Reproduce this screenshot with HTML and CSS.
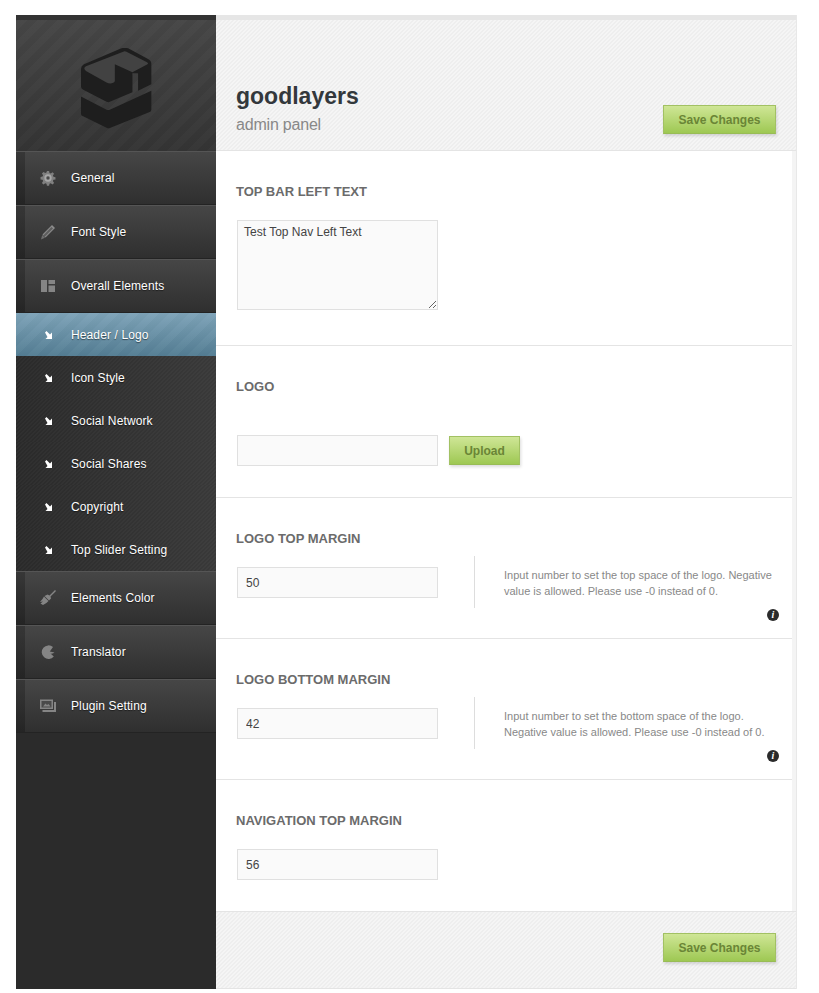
FILE: index.html
```html
<!DOCTYPE html>
<html lang="en">

<head>
    <meta charset="UTF-8">
    <meta name="viewport" content="width=device-width, initial-scale=1.0">
    <title>Goodlayers Admin Panel</title>

    <link rel="stylesheet" href="styles.css">
</head>

<body>
    <div class="panel">
        <div class="sidebar">
            <div class="logo">
                <svg class="logo-mark" viewBox="60 50 220 245" width="73" height="82">
                    <path fill="#1e1e1e" d="M72 98 L185 50 Q195 46 205 50 L265 82 Q275 87 275 97 V158 L235 178 V125 L218 125 V182 L148 212 Q145 213 140 211 L70 175 Q63 172 63 165 V112 Q63 103 72 98 Z" />
                    <path fill="#424242" d="M78 104 L190 60 Q195 58 200 60 L262 92 Q268 96 262 99 L218 122 L165 98 V148 Q165 152 160 154 Q150 158 140 153 L78 118 Q68 110 78 104 Z" />
                    <path fill="#1e1e1e" d="M63 195 L140 235 Q145 237 150 235 L275 178 V235 Q275 240 270 242 L150 290 Q145 292 140 289 L68 254 Q63 252 63 247 Z" />
                </svg>
            </div>

            <a class="item">
                <svg class="icon" viewBox="-1 -1 18 18" width="16" height="16">
                    <path fill="#808080" d="M6.800 0h2.400l.5 2.300 1.400.6 2-1.300 1.700 1.700-1.300 2 .6 1.400 2.300.5v2.400l-2.300.5-.6 1.400 1.300 2-1.700 1.700-2-1.300-1.400.6-.5 2.300H6.800l-.5-2.300-1.400-.6-2 1.300-1.700-1.700 1.300-2-.6-1.400-2.300-.5V6.800l2.300-.5.6-1.400-1.300-2 1.700-1.700 2 1.300 1.400-.6z" />
                    <circle cx="8" cy="8" r="3.200" fill="none" stroke="#a8a8a8" stroke-width="1.800" />
                    <circle cx="8" cy="8" r="1.600" fill="#4a4a4a" />
                </svg>
                <span>General</span>
            </a>
            <a class="item">
                <svg class="icon" viewBox="0 0 16 16" width="16" height="16">
                    <path fill="#8c8c8c" d="M12 1 L15 4 L5.500 13.500 L2.500 10.500 Z" />
                    <path fill="#5e5e5e" d="M11.500 3 L13 4.500 L4.800 12.700 L3.300 11.200 Z" />
                    <path fill="#6e6e6e" d="M2.200 11 L5 13.800 L1 15.500 Z" />
                </svg>
                <span>Font Style</span>
            </a>
            <a class="item">
                <svg class="icon" viewBox="0 0 16 16" width="16" height="16">
                    <path fill="#858585" d="M1 2h6v12H1z M8.500 2H15v4H8.500z M8.500 7.500H15V14H8.500z" />
                </svg>
                <span>Overall Elements</span>
            </a>

            <a class="sub sub-active">
                <svg class="arrow" viewBox="0 0 8 8" width="8" height="8"><path d="M0 1.500 L1.500 0 L5 3.500 L7 1.500 V8 H0.500 L2.500 6 Z" /></svg>
                <span>Header / Logo</span>
            </a>
            <a class="sub">
                <svg class="arrow" viewBox="0 0 8 8" width="8" height="8"><path d="M0 1.500 L1.500 0 L5 3.500 L7 1.500 V8 H0.500 L2.500 6 Z" /></svg>
                <span>Icon Style</span>
            </a>
            <a class="sub">
                <svg class="arrow" viewBox="0 0 8 8" width="8" height="8"><path d="M0 1.500 L1.500 0 L5 3.500 L7 1.500 V8 H0.500 L2.500 6 Z" /></svg>
                <span>Social Network</span>
            </a>
            <a class="sub">
                <svg class="arrow" viewBox="0 0 8 8" width="8" height="8"><path d="M0 1.500 L1.500 0 L5 3.500 L7 1.500 V8 H0.500 L2.500 6 Z" /></svg>
                <span>Social Shares</span>
            </a>
            <a class="sub">
                <svg class="arrow" viewBox="0 0 8 8" width="8" height="8"><path d="M0 1.500 L1.500 0 L5 3.500 L7 1.500 V8 H0.500 L2.500 6 Z" /></svg>
                <span>Copyright</span>
            </a>
            <a class="sub">
                <svg class="arrow" viewBox="0 0 8 8" width="8" height="8"><path d="M0 1.500 L1.500 0 L5 3.500 L7 1.500 V8 H0.500 L2.500 6 Z" /></svg>
                <span>Top Slider Setting</span>
            </a>

            <a class="item">
                <svg class="icon" viewBox="0 0 16 16" width="16" height="16">
                    <path fill="#858585" d="M15 0 L16 1 L10.500 6.500 L11 8.500 L9 10.500 L4.500 6 L7.500 4.500 L9.500 5.500 Z" />
                    <path fill="#858585" d="M4 6.500 L8.500 11 Q6.500 13.500 3 15 L0.500 13.500 L3 11.500 L0 12 Q2.500 9.500 4 6.500 Z" />
                </svg>
                <span>Elements Color</span>
            </a>
            <a class="item">
                <svg class="icon" viewBox="0 0 16 16" width="16" height="16">
                    <path fill="#858585" d="M13 3 A6.800 6.800 0 1 0 13.800 12.500 L10.500 9.500 Q13 10 14.500 8.500 L9.800 7.500 Z" />
                </svg>
                <span>Translator</span>
            </a>
            <a class="item">
                <svg class="icon" viewBox="0 0 16 16" width="16" height="16">
                    <path fill="#858585" d="M0 1.500h13v9.500H0z M14 4h2v10H2.500v-2H14z" />
                    <path fill="#4a4a4a" d="M1.500 3h10v6.500h-10z" />
                    <path fill="#858585" d="M3 8.500 L5.500 5.500 L7 7 L8.500 6 L10.500 8.500z" />
                </svg>
                <span>Plugin Setting</span>
            </a>
        </div>

        <div class="main">
            <div class="header">
                <div class="brand">
                    <h1>goodlayers</h1>
                    <p>admin panel</p>
                </div>
                <button class="btn btn-save">Save Changes</button>
            </div>

            <div class="content">
                <div class="section section-text">
                    <h3>TOP BAR LEFT TEXT</h3>
                    <textarea class="field field-area">Test Top Nav Left Text</textarea>
                </div>

                <div class="section section-logo">
                    <h3>LOGO</h3>
                    <div class="row row-upload">
                        <input class="field" type="text">
                        <button class="btn btn-upload">Upload</button>
                    </div>
                </div>

                <div class="section">
                    <h3>LOGO TOP MARGIN</h3>
                    <div class="row">
                        <input class="field" type="text" value="50">
                        <p class="desc">Input number to set the top space of the logo. Negative value is allowed. Please use -0 instead of 0.</p>
                    </div>
                    <span class="info">i</span>
                </div>

                <div class="section">
                    <h3>LOGO BOTTOM MARGIN</h3>
                    <div class="row">
                        <input class="field" type="text" value="42">
                        <p class="desc">Input number to set the bottom space of the logo. Negative value is allowed. Please use -0 instead of 0.</p>
                    </div>
                    <span class="info">i</span>
                </div>

                <div class="section section-last">
                    <h3>NAVIGATION TOP MARGIN</h3>
                    <div class="row">
                        <input class="field" type="text" value="56">
                    </div>
                </div>
            </div>

            <div class="footer">
                <button class="btn btn-save">Save Changes</button>
            </div>
        </div>
    </div>
</body>

</html>
```

FILE: styles.css
```css
body {
    margin: 0;
    background-color: #fff;
    font-family: "Liberation Sans", Arial, sans-serif;
}

.panel {
    display: flex;
    width: 781px;
    height: 974px;
    margin: 15px 0 0 16px;
}

/* sidebar */

.sidebar {
    width: 200px;
    flex-shrink: 0;
    background-color: #2b2b2b;
}

.logo {
    display: flex;
    justify-content: center;
    height: 103px;
    padding-top: 28px;
    border-top: 5px solid #333;
    background:
        repeating-linear-gradient(-45deg, rgba(255, 255, 255, 0.014) 0 7.071px, rgba(0, 0, 0, 0.018) 7.071px 14.142px),
        linear-gradient(#464646, #343434);
}

.logo-mark {
    display: block;
}

.item {
    display: flex;
    align-items: center;
    height: 52px;
    padding-left: 24px;
    border-top: 1px solid #555;
    border-bottom: 1px solid #232323;
    background:
        linear-gradient(to right, rgba(0, 0, 0, 0.22) 0 9px, transparent 9px),
        linear-gradient(#464646, #2f2f2f);
    color: #fff;
    font-size: 12px;
    letter-spacing: 0.12px;
    text-shadow: 0 1px 1px rgba(0, 0, 0, 0.5);
}

.icon {
    flex-shrink: 0;
    margin-right: 15px;
}

.sub {
    display: flex;
    align-items: center;
    height: 43px;
    padding-left: 29px;
    background:
        linear-gradient(-45deg, rgba(255, 255, 255, 0.025) 25%, transparent 25% 50%, rgba(255, 255, 255, 0.025) 50% 75%, transparent 75%) 0 0 / 4px 4px,
        linear-gradient(to right, #2a2a2a, #393939);
    color: #fff;
    font-size: 12px;
    letter-spacing: 0.12px;
    text-shadow: 0 1px 1px rgba(0, 0, 0, 0.5);
}

.sub-active {
    background:
        repeating-linear-gradient(-45deg, rgba(255, 255, 255, 0.025) 0 7.071px, rgba(0, 0, 0, 0.015) 7.071px 14.142px),
        linear-gradient(#7ea3b8, #537d93);
}

.arrow {
    flex-shrink: 0;
    margin-right: 18px;
    fill: #fff;
}

/* main column */

.main {
    display: flex;
    flex-direction: column;
    flex: 1;
    min-width: 0;
    border-right: 1px solid #e8e8e8;
}

.header,
.footer {
    display: flex;
    justify-content: space-between;
    align-items: flex-end;
    background: linear-gradient(-45deg, #f5f5f5 25%, #eeeeee 25% 50%, #f5f5f5 50% 75%, #eeeeee 75%) 0 0 / 4px 4px;
}

.header {
    box-sizing: border-box;
    height: 136px;
    padding: 0 20px 16px 20px;
    border-top: 5px solid #e6e6e6;
    border-bottom: 1px solid #e4e4e4;
}

.brand h1 {
    margin: 0 0 2px 0;
    color: #33383c;
    font-size: 23px;
    line-height: 28px;
}

.brand p {
    margin: 4px 0 -2px 0;
    color: #888;
    font-size: 16px;
    letter-spacing: -0.2px;
    line-height: 22px;
}

.footer {
    box-sizing: border-box;
    flex: 1;
    justify-content: flex-end;
    padding: 0 20px 26px 0;
    border-top: 1px solid #e4e4e4;
    border-bottom: 1px solid #e4e4e4;
}

.btn {
    border: 1px solid #a2c163;
    border-bottom-color: #98bc55;
    background: linear-gradient(#cfe696, #9ec853);
    box-shadow: 1px 2px 3px rgba(0, 0, 0, 0.14);
    color: #6a8536;
    font-family: "Liberation Sans", Arial, sans-serif;
    font-size: 12px;
    font-weight: bold;
    cursor: pointer;
}

.btn-save {
    width: 113px;
    height: 29px;
    padding: 0;
}

.btn-upload {
    width: 71px;
    height: 29px;
    padding: 0;
    margin-left: 11px;
}

/* form sections */

.content {
    border-right: 4px solid #f4f4f4;
    background-color: #fff;
}

.section {
    position: relative;
    height: 109px;
    padding: 31px 0 0 20px;
    border-bottom: 1px solid #e4e4e4;
}

.section h3 {
    margin: 0;
    color: #6b6b6b;
    font-size: 13px;
    line-height: 20px;
}

.section-text {
    height: 163px;
}

.section-logo {
    height: 120px;
}

.section-last {
    height: 100px;
    border-bottom: none;
}

.row {
    display: flex;
    align-items: flex-start;
    margin-top: 7px;
}

.row-upload {
    align-items: center;
    margin-top: 38px;
}

.section-text .field-area {
    margin-top: 18px;
}

.field {
    display: block;
    box-sizing: border-box;
    width: 201px;
    height: 31px;
    margin: 11px 0 0 1px;
    padding: 0 8px;
    border: 1px solid #e0e0e0;
    background-color: #fafafa;
    color: #444;
    font-family: "Liberation Sans", Arial, sans-serif;
    font-size: 12px;
}

.row-upload .field {
    margin-top: 0;
}

.field-area {
    height: 90px;
    padding: 4px 6px;
    line-height: 14px;
}

.desc {
    box-sizing: border-box;
    width: 302px;
    height: 52px;
    margin: 0 0 0 36px;
    padding: 11px 0 0 29px;
    border-left: 1px solid #ddd;
    color: #888;
    font-size: 11px;
    line-height: 16px;
}

.info {
    position: absolute;
    right: 13px;
    bottom: 17px;
    width: 12px;
    height: 12px;
    border-radius: 50%;
    background-color: #2b2b2b;
    color: #fff;
    font-family: "Liberation Serif", serif;
    font-size: 10px;
    font-weight: bold;
    font-style: italic;
    line-height: 12px;
    text-align: center;
}
```
